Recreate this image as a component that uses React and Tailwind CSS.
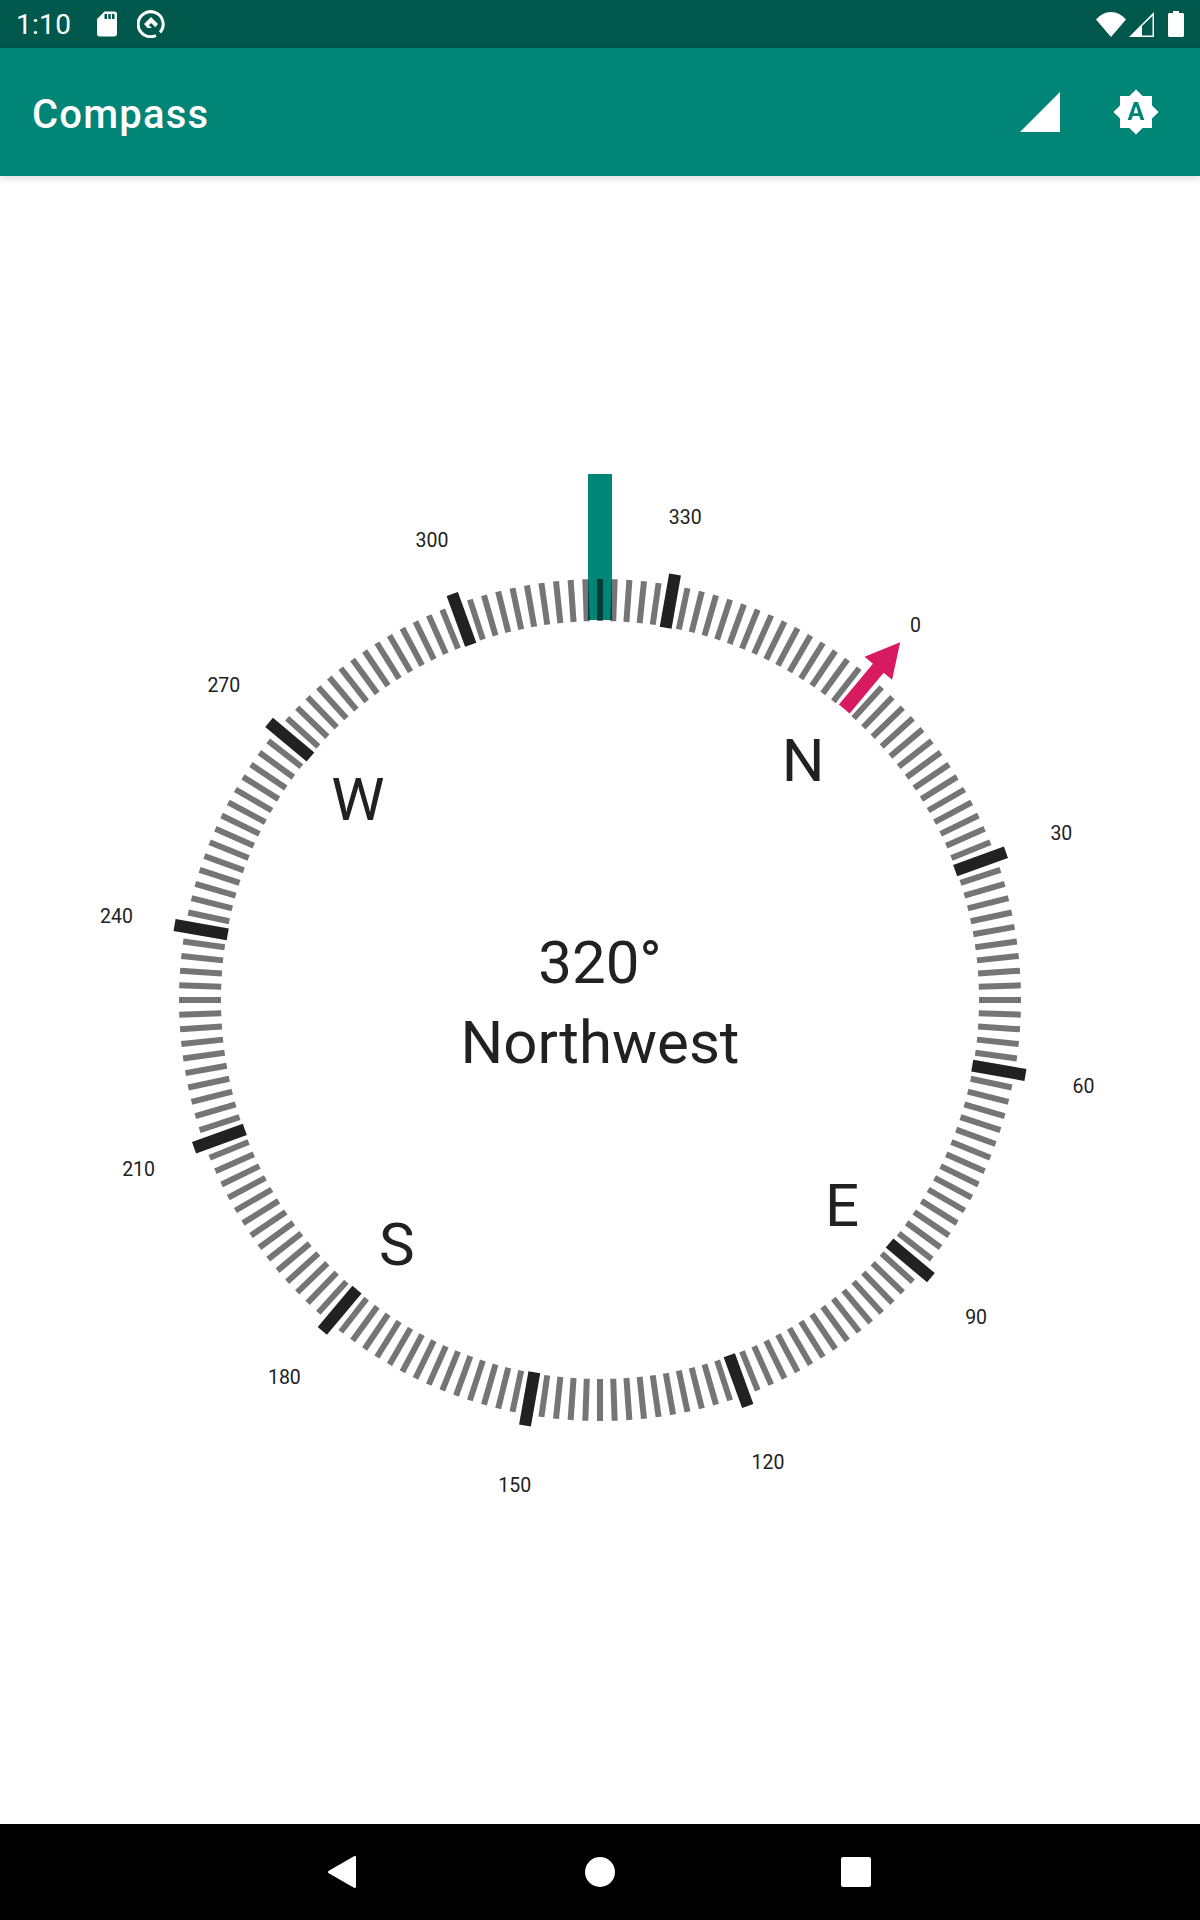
import React from 'react';

const CX = 500;
const CY = 500;
const HEADING = 320;

const polar = (deg, r) => {
  const a = ((deg - 90) * Math.PI) / 180;
  return [CX + r * Math.cos(a), CY + r * Math.sin(a)];
};

const labels = [0, 30, 60, 90, 120, 150, 180, 210, 240, 270, 300, 330];
const letters = [
  ['N', 40],
  ['E', 130],
  ['S', 220],
  ['W', 310],
];

const Ticks = () => {
  const items = [];
  for (let d = 0; d < 360; d += 2) {
    if (d === 0) continue; // the arrow sits here
    const major = d % 30 === 0;
    const rot = d - HEADING;
    const [x1, y1] = polar(rot, major ? 378 : 379);
    const [x2, y2] = polar(rot, major ? 432 : 421);
    items.push(
      <line
        key={d}
        x1={x1}
        y1={y1}
        x2={x2}
        y2={y2}
        stroke={major ? '#212121' : '#000000'}
        strokeOpacity={major ? 1 : 0.54}
        strokeWidth={major ? 12 : 6}
      />
    );
  }
  return items;
};

const CompassDial = () => (
  <div className="relative w-[1000px] h-[1000px] font-['Roboto',sans-serif] text-[#212121]">
    <svg className="absolute inset-0 overflow-visible" width="1000" height="1000" viewBox="0 0 1000 1000">
      <rect x="488" y="-26" width="24" height="146" fill="#008577" />
      <Ticks />
      <g transform={`rotate(40 ${CX} ${CY})`}>
        <polygon
          points="493,120 507,120 507,67 518,67 500,33 482,67 493,67"
          fill="#D81B60"
        />
      </g>
    </svg>
    {labels.map((d) => {
      const [x, y] = polar(d - HEADING, 491);
      return (
        <span
          key={d}
          className="absolute -translate-x-1/2 -translate-y-1/2 mt-[2px] text-[19.5px] leading-none"
          style={{ left: x, top: y }}
        >
          {d}
        </span>
      );
    })}
    {letters.map(([t, a]) => {
      const [x, y] = polar(a, 316);
      return (
        <span
          key={t}
          className="absolute -translate-x-1/2 -translate-y-1/2 mt-[3px] text-[60px] leading-none"
          style={{ left: x, top: y }}
        >
          {t}
        </span>
      );
    })}
    <div className="absolute inset-0 pt-[6px] flex flex-col items-center justify-center text-[60px] leading-[80px]">
      <span>320°</span>
      <span>Northwest</span>
    </div>
  </div>
);

const StatusBar = () => (
  <div className="h-12 shrink-0 bg-[#00574B] flex items-center text-white relative font-['Roboto',sans-serif]">
    <span className="ml-4 mt-[2px] w-[76px] text-[28px] font-normal tracking-[0.3px] leading-none">1:10</span>
    <svg width="30" height="30" viewBox="0 0 24 24" fill="#fff">
      <path d="M18 2h-8L4 8v12c0 1.1.9 2 2 2h12c1.1 0 2-.9 2-2V4c0-1.1-.9-2-2-2zm-6 6h-2V4h2v4zm3 0h-2V4h2v4zm3 0h-2V4h2v4z" />
    </svg>
    <svg className="ml-[15px]" width="28" height="28" viewBox="0 0 28 28" fill="none">
      <path d="M23 22.5 A12.5 12.5 0 1 0 19 25.5" stroke="#fff" strokeWidth="3" />
      <path d="M14 7 L21 14 L17.5 18 L10.5 18 L7 14 Z" fill="#fff" />
      <path d="M13 14 L19 20 L23 25" stroke="#00574B" strokeWidth="3" />
    </svg>
    <div className="ml-auto mr-4 flex items-center">
      <svg width="30" height="25" viewBox="0 0 30 25" fill="#fff">
        <path d="M0 7.5 C4 3 9 0 15 0 C21 0 26 3 30 7.5 L15 25 Z" />
      </svg>
      <svg className="ml-[3px]" width="25" height="25" viewBox="0 0 25 25">
        <path fillRule="evenodd" fill="#fff" d="M0 25 L25 0 V25 Z M13 23.5 H23.5 V4 L13 14 Z" />
      </svg>
      <svg className="ml-[14px]" width="16" height="26" viewBox="0 0 16 26" fill="#fff">
        <path d="M5 0 H11 V2 H14.5 C15.3 2 16 2.7 16 3.5 V24.5 C16 25.3 15.3 26 14.5 26 H1.5 C.7 26 0 25.3 0 24.5 V3.5 C0 2.7 .7 2 1.5 2 H5 Z" />
      </svg>
    </div>
  </div>
);

const AppBar = () => (
  <div className="h-32 shrink-0 bg-[#008577] flex items-center text-white shadow-[0_2px_8px_rgba(0,0,0,0.16)] z-10 font-['Roboto',sans-serif]">
    <span className="ml-8 mt-[6px] text-[40px] font-medium tracking-[1.2px] leading-none">Compass</span>
    <svg className="ml-auto" width="40" height="40" viewBox="0 0 40 40" fill="#fff">
      <polygon points="0,40 40,0 40,40" />
    </svg>
    <svg className="ml-[52px] mr-10" width="48" height="48" viewBox="0 0 24 24" fill="#fff">
      <path d="M10.85 12.65h2.3L12 9l-1.15 3.65zM20 8.69V4h-4.69L12 .69 8.69 4H4v4.69L.69 12 4 15.31V20h4.69L12 23.31 15.31 20H20v-4.69L23.31 12 20 8.69zM14.3 16l-.7-2h-3.2l-.7 2H7.8L11 7h2l3.2 9h-1.9z" />
    </svg>
  </div>
);

const NavBar = () => (
  <div className="h-24 shrink-0 bg-black flex items-center relative">
    <svg className="ml-[328px]" width="28" height="32" viewBox="0 0 28 32" fill="#fff">
      <path d="M26 0.3 C27 -.2 28 .3 28 1.5 V30.5 C28 31.7 27 32.2 26 31.7 L.8 17.2 C-.2 16.5 -.2 15.5 .8 14.8 Z" />
    </svg>
    <div className="ml-[229px] w-[30px] h-[30px] rounded-full bg-white" />
    <div className="ml-[226px] w-[30px] h-[30px] rounded-[2px] bg-white" />
  </div>
);

export default function App() {
  return (
    <div className="w-[1200px] h-[1920px] flex flex-col bg-white overflow-hidden">
      <StatusBar />
      <AppBar />
      <div className="flex-1 flex items-center justify-center">
        <CompassDial />
      </div>
      <NavBar />
    </div>
  );
}
